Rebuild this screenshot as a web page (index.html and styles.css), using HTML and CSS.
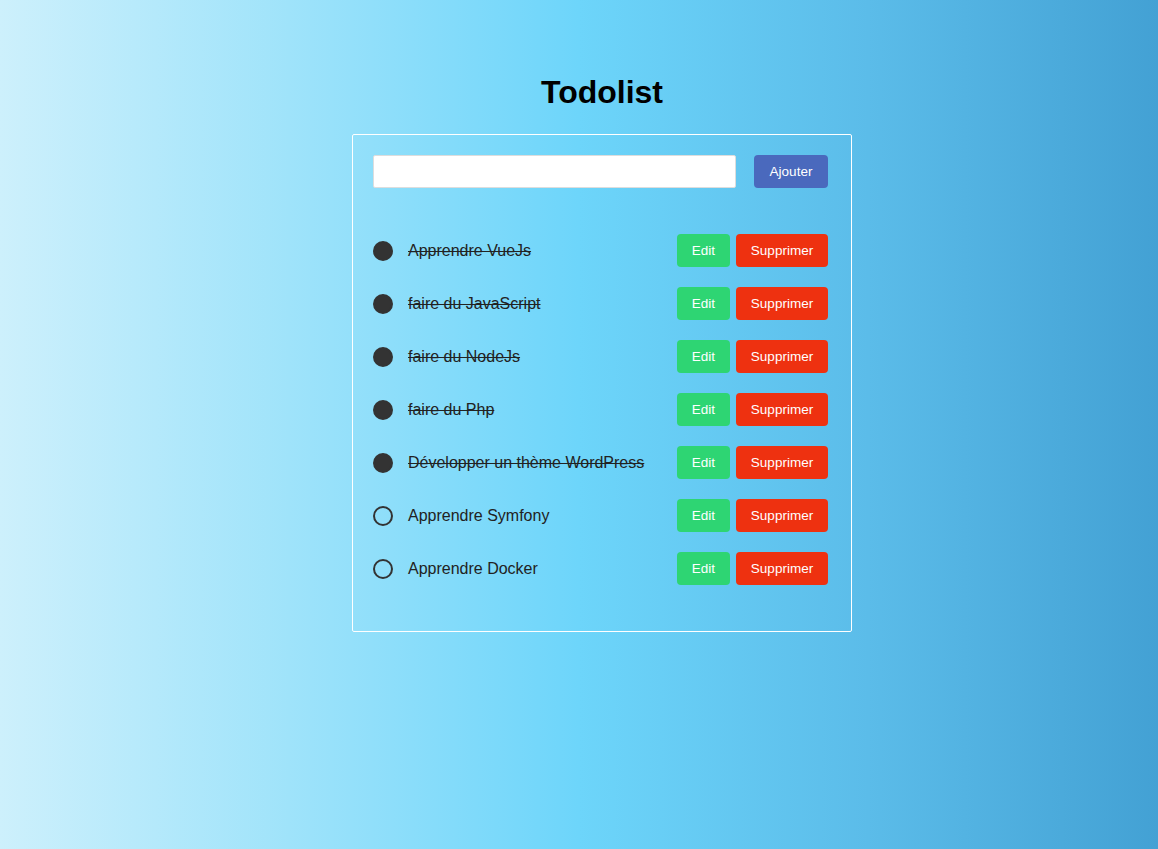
FILE: index.html
```html
<!DOCTYPE html>
<html lang="fr">
<head>
<meta charset="utf-8">
<title>Todolist</title>
<link rel="stylesheet" href="styles.css">
</head>
<body>
<div class="page">
  <h1 class="title">Todolist</h1>
  <div class="card">
    <form class="add-form">
      <input class="add-input" type="text">
      <button class="btn btn-add" type="button">Ajouter</button>
    </form>
    <ul class="list">
      <li class="item done"><span class="check"></span><span class="label">Apprendre VueJs</span><span class="actions"><button class="btn btn-edit">Edit</button><button class="btn btn-del">Supprimer</button></span></li>
      <li class="item done"><span class="check"></span><span class="label">faire du JavaScript</span><span class="actions"><button class="btn btn-edit">Edit</button><button class="btn btn-del">Supprimer</button></span></li>
      <li class="item done"><span class="check"></span><span class="label">faire du NodeJs</span><span class="actions"><button class="btn btn-edit">Edit</button><button class="btn btn-del">Supprimer</button></span></li>
      <li class="item done"><span class="check"></span><span class="label">faire du Php</span><span class="actions"><button class="btn btn-edit">Edit</button><button class="btn btn-del">Supprimer</button></span></li>
      <li class="item done"><span class="check"></span><span class="label">Développer un thème WordPress</span><span class="actions"><button class="btn btn-edit">Edit</button><button class="btn btn-del">Supprimer</button></span></li>
      <li class="item"><span class="check"></span><span class="label">Apprendre Symfony</span><span class="actions"><button class="btn btn-edit">Edit</button><button class="btn btn-del">Supprimer</button></span></li>
      <li class="item"><span class="check"></span><span class="label">Apprendre Docker</span><span class="actions"><button class="btn btn-edit">Edit</button><button class="btn btn-del">Supprimer</button></span></li>
    </ul>
  </div>
</div>
</body>
</html>
```

FILE: styles.css
```css
html, body {
  margin: 0;
  padding: 0;
  height: 100%;
}
body {
  font-family: "Liberation Sans", Arial, sans-serif;
  background: linear-gradient(to right, #cdf0fc 0%, #9fe3fa 25%, #6dd5fa 50%, #5bbce9 75%, #43a1d4 100%);
  color: #222;
}
.page {
  display: flex;
  flex-direction: column;
  align-items: center;
  padding-top: 74px;
  padding-left: 46px;
}
.title {
  margin: 0 0 24px;
  font-size: 32px;
  line-height: 36px;
  font-weight: bold;
  color: #000;
}
.card {
  width: 500px;
  box-sizing: border-box;
  border: 1px solid #fff;
  border-radius: 2px;
  padding: 20px 23px 20px 20px;
}
.add-form {
  display: flex;
  align-items: center;
  gap: 18px;
  margin: 0;
}
.add-input {
  width: 363px;
  height: 33px;
  box-sizing: border-box;
  border: 1px solid #ddd;
  border-radius: 2px;
  background: #fff;
  padding: 0 8px;
  font-size: 15px;
  font-family: inherit;
  outline: none;
}
.btn {
  height: 33px;
  border: none;
  border-radius: 4px;
  color: #fff;
  font-family: "Liberation Sans", Arial, sans-serif;
  font-size: 13.5px;
  padding: 0;
  cursor: pointer;
}
.btn-add {
  width: 74px;
  background: #4a69bd;
}
.list {
  list-style: none;
  margin: 46px 0 26px;
  padding: 0;
  display: flex;
  flex-direction: column;
  gap: 20px;
}
.item {
  display: flex;
  align-items: center;
  height: 33px;
}
.check {
  width: 20px;
  height: 20px;
  box-sizing: border-box;
  border: 2px solid #333;
  border-radius: 50%;
  flex: none;
}
.item.done .check {
  background: #333;
}
.label {
  margin-left: 15px;
  font-size: 16px;
  color: #222;
  flex: 1;
}
.item.done .label {
  text-decoration: line-through;
}
.actions {
  display: flex;
  gap: 6px;
}
.btn-edit {
  width: 53px;
  background: #2ed573;
}
.btn-del {
  width: 92px;
  background: #ee3110;
}
```
